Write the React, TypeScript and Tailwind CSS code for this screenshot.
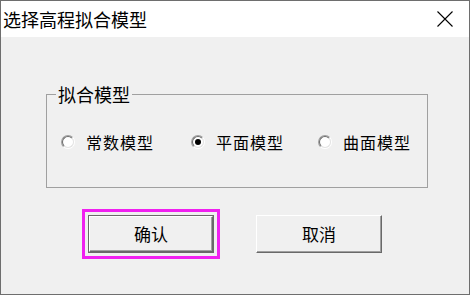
import React from 'react'

const font = { fontFamily: '"Noto Sans CJK SC", "Noto Sans", sans-serif' }

interface RadioProps {
  label: string
  checked?: boolean
  className?: string
}

function Radio({ label, checked = false, className = '' }: RadioProps) {
  return (
    <label className={`flex items-center gap-[11px] ${className}`}>
      <span className="flex h-[14px] w-[14px] shrink-0 items-center justify-center rounded-full border border-t-[#a0a0a0] border-l-[#a0a0a0] border-r-white border-b-white">
        <span className="flex h-[12px] w-[12px] shrink-0 items-center justify-center rounded-full border border-t-[#696969] border-l-[#696969] border-r-[#e3e3e3] border-b-[#e3e3e3] bg-white">
          {checked && <span className="h-[6px] w-[6px] rounded-full bg-black" />}
        </span>
      </span>
      <span className="text-[16px] leading-[20px] tracking-[1px] text-black">{label}</span>
    </label>
  )
}

export default function App() {
  return (
    <div
      className="flex h-[295px] w-[470px] flex-col border border-[#6e6e6e] bg-[#f0f0f0]"
      style={font}
    >
      <div className="flex h-[36px] items-center justify-between bg-white pl-[2px] pr-[16px]">
        <span className="text-[18px] leading-[24px] text-black">选择高程拟合模型</span>
        <svg width="16" height="16" viewBox="0 0 16 16" className="text-black">
          <path d="M0.5 0.5 L15.5 15.5 M15.5 0.5 L0.5 15.5" stroke="currentColor" strokeWidth="1.1" fill="none" />
        </svg>
      </div>

      <fieldset className="mt-[45px] ml-[45px] mr-[41px] border border-[#a0a0a0] px-0 pt-[26px] pb-[35px]">
        <legend className="ml-[9px] px-[2px] text-[18px] leading-[24px] text-black">拟合模型</legend>
        <div className="flex items-center pl-[14px]">
          <Radio label="常数模型" />
          <Radio label="平面模型" checked className="ml-[37px]" />
          <Radio label="曲面模型" className="ml-[34px]" />
        </div>
      </fieldset>

      <div className="mt-[27px] flex pl-[87px]">
        <button className="h-[38px] w-[126px] border border-[#696969] outline-[3px] outline-offset-[3px] outline-[#f020f0]">
          <span className="flex h-full w-full items-center justify-center border border-t-white border-l-white border-r-[#696969] border-b-[#696969] shadow-[inset_-1px_-1px_0_#a0a0a0] text-[17px] text-black">
            确认
          </span>
        </button>
        <button className="ml-[42px] flex h-[38px] w-[126px] items-center justify-center border border-t-white border-l-white border-r-[#696969] border-b-[#696969] shadow-[inset_-1px_-1px_0_#a0a0a0] text-[17px] text-black">
          取消
        </button>
      </div>
    </div>
  )
}
